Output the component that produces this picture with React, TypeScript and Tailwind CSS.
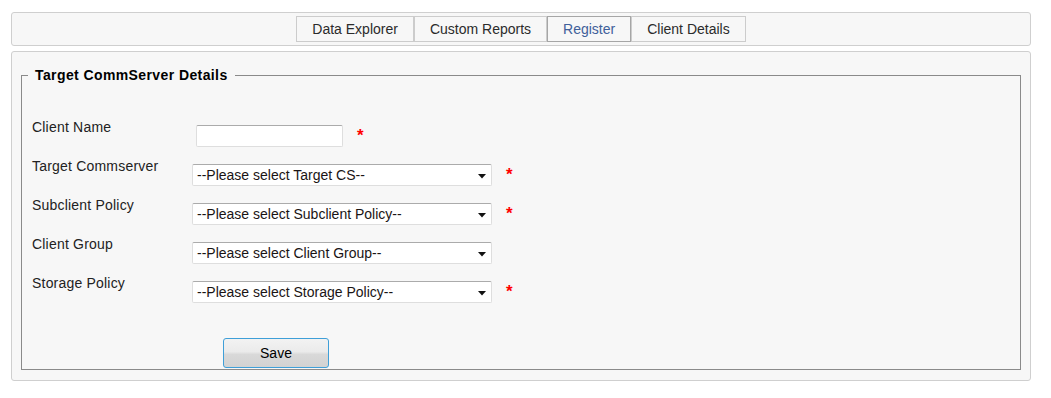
import React from 'react'

const tabs = ['Data Explorer', 'Custom Reports', 'Register', 'Client Details']

interface Row {
  label: string
  kind: 'input' | 'select'
  placeholder?: string
  required?: boolean
}

const rows: Row[] = [
  { label: 'Client Name', kind: 'input', required: true },
  { label: 'Target Commserver', kind: 'select', placeholder: '--Please select Target CS--', required: true },
  { label: 'Subclient Policy', kind: 'select', placeholder: '--Please select Subclient Policy--', required: true },
  { label: 'Client Group', kind: 'select', placeholder: '--Please select Client Group--' },
  { label: 'Storage Policy', kind: 'select', placeholder: '--Please select Storage Policy--', required: true },
]

const Arrow = () => (
  <svg width="8" height="5" viewBox="0 0 8 5" className="absolute right-[5px] top-[9px]">
    <path d="M0 0h8L4 4.5z" fill="#111"></path>
  </svg>
)

const Required = () => (
  <span className="ml-[14px] mt-[2px] text-[17px] font-bold leading-[17px] text-[#ff0000]">*</span>
)

const App: React.FC = () => {
  return (
    <div className="w-[1051px] h-[398px] bg-white px-[11px] pt-[12px] font-['Liberation_Sans',Arial,sans-serif] text-[14px] text-[#222]">
      {/* Tabs bar */}
      <div className="w-[1020px] h-[34px] border border-[#cfcfcf] rounded-[3px] bg-[#f7f7f7] flex justify-center py-[3px]">
        {tabs.map((tab) => (
          <div
            key={tab}
            className={
              tab === 'Register'
                ? 'h-[26px] px-[15px] flex items-center border border-[#a6a6a6] bg-[#f7f7f7] text-[#40609a]'
                : 'h-[26px] px-[15px] flex items-center border border-[#cccccc] bg-[#f7f7f7] text-[#2b2b2b]'
            }
          >
            {tab}
          </div>
        ))}
      </div>

      {/* Form panel */}
      <div className="mt-[5px] w-[1020px] h-[330px] border border-[#cfcfcf] rounded-[3px] bg-[#f7f7f7] px-[9px] pt-[16px]">
        <fieldset className="h-[302px] border border-[#8a8a8a]">
          <legend className="ml-[6px] px-[7px] text-[14px] font-bold leading-[15px] tracking-[0.4px] text-black">Target CommServer Details</legend>

          <div className="mt-[36px] pl-[10px] flex flex-col">
            {rows.map((row) => (
              <div key={row.label} className="flex items-start h-[39px]">
                <div className="w-[160px] leading-[16px] tracking-[0.2px]">{row.label}</div>
                {row.kind === 'input' ? (
                  <div className="flex items-start mt-[6px] ml-[4px]">
                    <div className="w-[147px] h-[22px] bg-white border border-[#dedede] border-t-[#ababab] rounded-[2px]"></div>
                    <Required />
                  </div>
                ) : (
                  <div className="flex items-start mt-[6px]">
                    <div className="relative w-[300px] h-[22px] bg-white border border-[#dedede] border-t-[#ababab] rounded-[2px] pl-[4px] leading-[20px] text-[#1a1414]">
                      {row.placeholder}
                      <Arrow />
                    </div>
                    {row.required ? <Required /> : null}
                  </div>
                )}
              </div>
            ))}
          </div>

          <div className="mt-[24px] ml-[201px]">
            <button className="w-[106px] h-[30px] border border-[#3f9fd8] rounded-[3px] bg-[linear-gradient(#f2f2f2_0%,#ebebeb_45%,#d9d9d9_55%,#d2d2d2_100%)] text-[14px] text-black">
              Save
            </button>
          </div>
        </fieldset>
      </div>
    </div>
  )
}

export default App
